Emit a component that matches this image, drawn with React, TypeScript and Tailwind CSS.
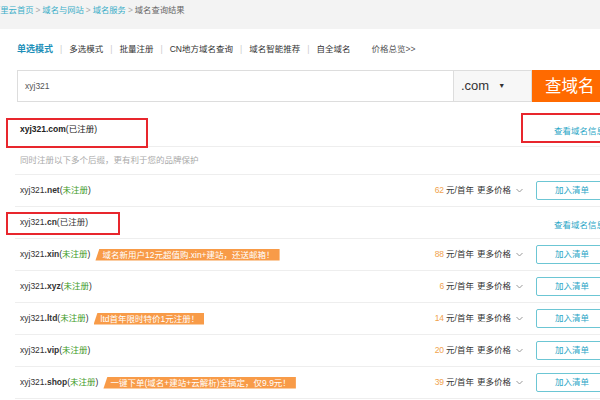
import React from "react";

const FONT = { fontFamily: '"Liberation Sans", "Noto Sans CJK SC", sans-serif' };

interface Row {
  sld: string;
  tld: string;
  registered: boolean;
  price?: number;
  tag?: string;
  box?: number; // width of red annotation box
}

const ROWS: Row[] = [
  { sld: "xyj321", tld: ".net", registered: false, price: 62 },
  { sld: "xyj321", tld: ".cn", registered: true, box: 114 },
  { sld: "xyj321", tld: ".xin", registered: false, price: 88, tag: "域名新用户12元超值购.xin+建站，还送邮箱！" },
  { sld: "xyj321", tld: ".xyz", registered: false, price: 6 },
  { sld: "xyj321", tld: ".ltd", registered: false, price: 14, tag: "ltd首年限时特价1元注册！" },
  { sld: "xyj321", tld: ".vip", registered: false, price: 20 },
  { sld: "xyj321", tld: ".shop", registered: false, price: 39, tag: "一键下单(域名+建站+云解析)全搞定，仅9.9元！" },
];

function Chevron() {
  return (
    <svg width="7" height="5" viewBox="0 0 7 5" className="ml-[5px]">
      <path d="M0.5 1l3 3 3-3" fill="none" stroke="#999" strokeWidth="1" />
    </svg>
  );
}

function DomainRow({ row }: { row: Row }) {
  return (
    <div className="relative flex items-center h-[32px] border-b border-[#eeeeee]">
      {row.box && (
        <div
          className="absolute left-[-9px] top-[5px] h-[23px] border-2 border-[#e8262d]"
          style={{ width: row.box }}
        />
      )}
      <div className="flex-1 flex items-center pl-[5px] text-[8.5px] text-[#333] whitespace-nowrap">
        <span>
          {row.sld}
          <b className="font-semibold">{row.tld}</b>
        </span>
        {row.registered ? (
          <span>(已注册)</span>
        ) : (
          <span>
            (<span className="text-[#3c9a1e]">未注册</span>)
          </span>
        )}
        {row.tag && (
          <span className="ml-[5px] h-[12px] leading-[12px] pl-[7px] pr-[5px] bg-[#f89b48] text-white text-[8.5px] [clip-path:polygon(4px_0,100%_0,100%_100%,0_100%)]">
            {row.tag}
          </span>
        )}
      </div>
      {row.price !== undefined && (
        <div className="flex items-center mr-[13px] text-[8.5px] text-[#333] whitespace-nowrap">
          <span className="text-[#f0a24e] mr-[2px]">{row.price}</span>
          <span>元/首年</span>
          <span className="ml-[3px]">更多价格</span>
          <Chevron />
        </div>
      )}
      <div className="w-[84px] shrink-0">
        {row.registered ? (
          <span className="pl-[18px] text-[8.5px] text-[#2aa6c6] whitespace-nowrap">查看域名信息</span>
        ) : (
          <button className="w-[72px] h-[19px] border border-[#6cc6d4] rounded-[2px] text-[8.5px] text-[#2aa6c6] flex items-center justify-center">
            加入清单
          </button>
        )}
      </div>
    </div>
  );
}

export default function App() {
  const tabs = ["多选模式", "批量注册", "CN地方域名查询", "域名智能推荐", "自全域名"];
  return (
    <div className="w-[600px] h-[400px] overflow-hidden bg-white" style={FONT}>
      {/* breadcrumb */}
      <div className="h-[29px] bg-[#f3f3f3] flex items-start pt-[4px] text-[8.3px] whitespace-nowrap">
        <span className="-ml-[8px] text-[#3aaec8]">阿里云首页</span>
        <span className="text-[#aaa] mx-[2px]">&gt;</span>
        <span className="text-[#3aaec8]">域名与网站</span>
        <span className="text-[#aaa] mx-[2px]">&gt;</span>
        <span className="text-[#3aaec8]">域名服务</span>
        <span className="text-[#aaa] mx-[2px]">&gt;</span>
        <span className="text-[#666]">域名查询结果</span>
      </div>

      <div className="w-[620px] pl-[15px]">
        {/* tabs */}
        <div className="h-[41px] pl-[2px] flex items-center text-[8.5px] text-[#333] whitespace-nowrap">
          <span className="font-bold text-[#1d8fb8] text-[9px]">单选模式</span>
          {tabs.map(t => (
            <React.Fragment key={t}>
              <span className="text-[#ccc] mx-[7px]">|</span>
              <span>{t}</span>
            </React.Fragment>
          ))}
          <span className="ml-[21px] text-[#555]">价格总览&gt;&gt;</span>
        </div>

        {/* search */}
        <div className="flex h-[32px] ml-[2px]">
          <div className="w-[436px] border border-[#dddddd] border-r-0 flex items-center pl-[7px] text-[8.5px] text-[#555]">
            xyj321
          </div>
          <div className="w-[79px] border border-[#dddddd] bg-[#f7f7f7] flex items-center pl-[7px] text-[13px] text-[#333]">
            .com
            <span className="ml-[9px] text-[7px] text-[#333]">▼</span>
          </div>
          <button className="w-[86px] bg-[#ff6a00] text-white text-[16.5px] text-left pl-[13px]">查域名</button>
        </div>

        {/* registered .com */}
        <div className="relative mt-[10px] flex items-center h-[35px] border-b border-[#eeeeee]">
          <div className="absolute left-[-9px] top-[6px] w-[142px] h-[30px] border-2 border-[#e8262d]" />
          <div className="absolute left-[506px] top-[1px] w-[100px] h-[30px] border-2 border-[#e8262d]" />
          <div className="flex-1 pl-[5px] text-[8.5px] text-[#222]">
            <b className="font-bold">xyj321.com</b>(已注册)
          </div>
          <div className="w-[84px] shrink-0">
            <span className="pl-[18px] text-[8.5px] text-[#2aa6c6] whitespace-nowrap">查看域名信息</span>
          </div>
        </div>

        <div className="h-[27px] flex items-center pl-[5px] text-[8.5px] text-[#aaa]">
          同时注册以下多个后缀，更有利于您的品牌保护
        </div>

        <div className="border-t border-[#eeeeee]">
          {ROWS.map(r => (
            <DomainRow key={r.tld} row={r} />
          ))}
        </div>
      </div>
    </div>
  );
}
